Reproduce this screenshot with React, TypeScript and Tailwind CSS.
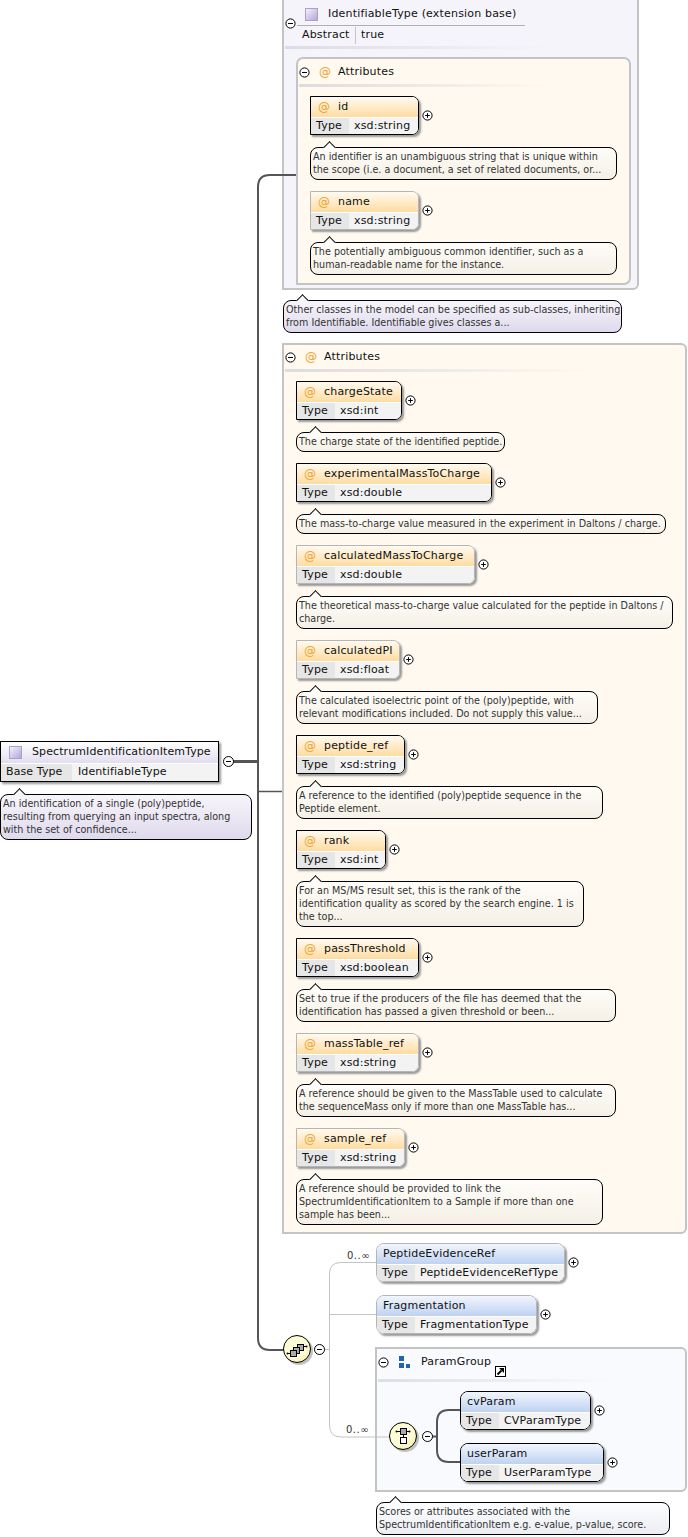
const attrDoc = "bg-linear-to-b from-[#fffdf9] to-[#f4f0e6]";

function Toggle({ open = false }: { open?: boolean }) {
  return (
    <svg width="11" height="11" viewBox="0 0 11 11" className="shrink-0">
      <circle cx="5.5" cy="5.5" r="4.6" fill="#fff" stroke="#000" />
      <path d={open ? "M3 5.5h5" : "M3.2 5.5h4.6M5.5 3.2v4.6"} stroke="#000" />
    </svg>
  );
}

function Doc({ lines, width, tone = attrDoc, notch = "bg-[#fffdf9]" }: { lines: string[]; width: string; tone?: string; notch?: string }) {
  return (
    <div className={`relative shrink-0 rounded-[8px] border border-black px-[2px] pt-[2px] pb-[3px] text-[9.6px] leading-[13px] whitespace-nowrap text-[#333] ${width} ${tone}`}>
      <div className={`absolute -top-[5px] left-[14px] h-[9px] w-[9px] rotate-45 border-t border-l border-black ${notch}`} />
      <div className="relative">
        {lines.map((line) => (
          <div key={line}>{line}</div>
        ))}
      </div>
    </div>
  );
}

function TypeRow({ type }: { type: string }) {
  return (
    <div className="flex h-[17px] items-center border-t border-white bg-[#f3f3f3]">
      <div className="flex h-full w-[38px] items-center bg-[#e6e6e6] pl-[5px]">Type</div>
      <div className="pl-[5px]">{type}</div>
    </div>
  );
}

function AttrCard({ name, type, width, optional }: { name: string; type: string; width: string; optional?: boolean }) {
  return (
    <div className="flex items-center gap-[3px]">
      <div className={`overflow-hidden rounded-r-[7px] border text-[11px] tracking-[0.18px] shadow-[2px_2px_2px_#999] ${optional ? "border-[#b5b5b5]" : "border-black"} ${width}`}>
        <div className="flex h-[20px] items-center bg-linear-to-b from-[#fffaf0] to-[#ffdca0]">
          <span className="w-[27px] pl-[7px] text-[12px] text-[#eda32c]">@</span>
          <span>{name}</span>
        </div>
        <TypeRow type={type} />
      </div>
      <Toggle />
    </div>
  );
}

function ElementCard({ name, type, width, optional }: { name: string; type: string; width: string; optional?: boolean }) {
  return (
    <div className="flex items-center gap-[3px]">
      <div className={`overflow-hidden rounded-[8px] border text-[11px] tracking-[0.18px] shadow-[2px_2px_2px_#999] ${optional ? "border-[#b5b5b5]" : "border-black"} ${width}`}>
        <div className="flex h-[20px] items-center bg-linear-to-b from-[#f2f6fd] to-[#bfd2f1] pl-[6px]">{name}</div>
        <TypeRow type={type} />
      </div>
      <Toggle />
    </div>
  );
}

function Attribute(props: { name: string; type: string; cardWidth: string; docWidth: string; lines: string[]; optional?: boolean }) {
  return (
    <div className="flex flex-col gap-[12px]">
      <AttrCard name={props.name} type={props.type} width={props.cardWidth} optional={props.optional} />
      <Doc lines={props.lines} width={props.docWidth} />
    </div>
  );
}

function AttributesHeader({ line }: { line: string }) {
  return (
    <>
      <div className="flex h-[14px] items-center text-[11px] tracking-[0.18px]">
        <Toggle open />
        <span className="w-[28px] pl-[9px] text-[12px] text-[#eda32c]">@</span>
        <span>Attributes</span>
      </div>
      <div className={`mt-[5px] h-[3px] bg-linear-to-r from-[#dcdcdc] to-transparent ${line}`} />
    </>
  );
}

function TypeIcon() {
  return <div className="h-[13px] w-[13px] shrink-0 border border-[#a9a2c4] bg-linear-to-br from-[#f4f1fb] to-[#b4a6d8]" />;
}

const attributes = [
  { name: "chargeState", type: "xsd:int", cardWidth: "w-[106px]", docWidth: "w-[209px]", lines: ["The charge state of the identified peptide."] },
  { name: "experimentalMassToCharge", type: "xsd:double", cardWidth: "w-[196px]", docWidth: "w-[370px]", lines: ["The mass-to-charge value measured in the experiment in Daltons / charge."] },
  { name: "calculatedMassToCharge", type: "xsd:double", cardWidth: "w-[179px]", docWidth: "w-[377px]", optional: true, lines: ["The theoretical mass-to-charge value calculated for the peptide in Daltons /", "charge."] },
  { name: "calculatedPI", type: "xsd:float", cardWidth: "w-[104px]", docWidth: "w-[302px]", optional: true, lines: ["The calculated isoelectric point of the (poly)peptide, with", "relevant modifications included. Do not supply this value..."] },
  { name: "peptide_ref", type: "xsd:string", cardWidth: "w-[109px]", docWidth: "w-[307px]", lines: ["A reference to the identified (poly)peptide sequence in the", "Peptide element."] },
  { name: "rank", type: "xsd:int", cardWidth: "w-[90px]", docWidth: "w-[288px]", lines: ["For an MS/MS result set, this is the rank of the", "identification quality as scored by the search engine. 1 is", "the top..."] },
  { name: "passThreshold", type: "xsd:boolean", cardWidth: "w-[123px]", docWidth: "w-[320px]", lines: ["Set to true if the producers of the file has deemed that the", "identification has passed a given threshold or been..."] },
  { name: "massTable_ref", type: "xsd:string", cardWidth: "w-[123px]", docWidth: "w-[320px]", optional: true, lines: ["A reference should be given to the MassTable used to calculate", "the sequenceMass only if more than one MassTable has..."] },
  { name: "sample_ref", type: "xsd:string", cardWidth: "w-[109px]", docWidth: "w-[307px]", optional: true, lines: ["A reference should be provided to link the", "SpectrumIdentificationItem to a Sample if more than one", "sample has been..."] },
];

function Connectors() {
  return (
    <svg width="688" height="1537" className="pointer-events-none absolute top-0 left-0">
      <defs>
        <radialGradient id="node" cx="0.4" cy="0.35" r="0.75">
          <stop offset="0.6" stopColor="#fffcd8" />
          <stop offset="1" stopColor="#f3e9a6" />
        </radialGradient>
      </defs>
      <g fill="none" stroke="#555">
        <path d="M233 761.5H258" strokeWidth="3" />
        <path d="M296 175H270Q258 175 258 187V1338Q258 1350 270 1350H284" strokeWidth="2" />
        <path d="M258 791.5H282" strokeWidth="1.5" />
        <path d="M432 1436.5H437M460 1410H449Q437 1410 437 1422V1450Q437 1462 449 1462H460" strokeWidth="2" />
      </g>
      <g fill="none" stroke="#c4c4c4">
        <path d="M324 1349.5H329.5M376 1262.5H341Q329.5 1262.5 329.5 1274V1425Q329.5 1437 341 1437H390M329.5 1314.5H376" />
      </g>

      {/* sequence node */}
      <circle cx="299" cy="1351" r="14" fill="#999" opacity="0.6" />
      <circle cx="297" cy="1349" r="13.5" fill="url(#node)" stroke="#000" />
      <path d="M287 1353.500h3M303 1346.500h4" stroke="#000" />
      <circle cx="287.500" cy="1353.500" r="1" fill="#000" />
      <circle cx="306.500" cy="1346.500" r="1" fill="#000" />
      <rect x="297.500" y="1344.500" width="6" height="6" fill="#aaa" stroke="#000" />
      <rect x="293.500" y="1347.500" width="6" height="6" fill="#aaa" stroke="#000" />
      <rect x="290.500" y="1350.500" width="6" height="6" fill="#aaa" stroke="#000" />

      {/* choice node */}
      <circle cx="405" cy="1438" r="14" fill="#999" opacity="0.6" />
      <circle cx="403" cy="1436" r="13.500" fill="url(#node)" stroke="#000" />
      <path d="M396 1431.500h14M403.500 1434v3" stroke="#000" />
      <circle cx="396.500" cy="1431.500" r="1" fill="#000" />
      <circle cx="409.500" cy="1431.500" r="1" fill="#000" />
      <rect x="400.500" y="1428.500" width="6" height="6" fill="#aaa" stroke="#000" />
      <rect x="400.500" y="1437.500" width="6" height="6" fill="#fff" stroke="#000" />

      <g fill="#fff" stroke="#000">
        <circle cx="228.500" cy="761.500" r="5" />
        <circle cx="319.500" cy="1349.500" r="5" />
        <circle cx="427.500" cy="1436.500" r="5" />
      </g>
      <path d="M226 761.500h5M317 1349.500h5M425 1436.500h5" stroke="#000" />
    </svg>
  );
}

export default function App() {
  return (
    <div className="relative flex h-[1537px] w-[688px] overflow-hidden bg-white font-['DejaVu_Sans',sans-serif] text-[#111]">
      <div className="flex w-[282px] shrink-0 flex-col gap-[12px] pt-[741px]">
        <div className="w-[219px] border border-black text-[11px] tracking-[0.1px] shadow-[2px_2px_2px_#999]">
          <div className="flex h-[21px] items-center gap-[10px] bg-linear-to-b from-white to-[#e2deee] pl-[8px]">
            <TypeIcon />
            <span>SpectrumIdentificationItemType</span>
          </div>
          <div className="flex h-[18px] items-center border-t border-white bg-[#f3f3f3]">
            <div className="flex h-full w-[71px] items-center bg-[#e6e6e6] pl-[5px]">Base Type</div>
            <div className="pl-[6px]">IdentifiableType</div>
          </div>
        </div>
        <Doc
          width="w-[252px]"
          tone="bg-linear-to-b from-[#f7f5fb] to-[#dfdaec]"
          notch="bg-[#f7f5fb]"
          lines={["An identification of a single (poly)peptide,", "resulting from querying an input spectra, along", "with the set of confidence..."]}
        />
      </div>

      <div className="flex w-[406px] flex-col">
        <div className="-mt-px h-[291px] w-[357px] shrink-0 rounded-br-[6px] border-2 border-t border-[#c4c4c4] bg-[#f6f4fb]">
          <div className="relative ml-[1px] h-[48px] text-[11px] tracking-[0.18px]">
            <div className="absolute top-[18px] left-[0px]">
              <Toggle open />
            </div>
            <div className="ml-[12px] flex h-[26px] w-[228px] items-center gap-[10px] border-b border-[#b0b0b0] pt-[4px] pl-[8px]">
              <TypeIcon />
              <span>IdentifiableType (extension base)</span>
            </div>
            <div className="ml-[17px] flex h-[19px] items-center">
              <span className="w-[53px]">Abstract</span>
              <span className="border-l border-[#c4c4c4] pl-[5px]">true</span>
            </div>
            <div className="mt-[1px] h-[3px] w-[270px] bg-linear-to-r from-[#dedbe8] to-transparent" />
          </div>
          <div className="mt-[9px] ml-[12px] h-[228px] w-[335px] rounded-[7px] rounded-bl-none border-2 border-[#c4c4c4] bg-[#fff9ef] pt-[6px] pl-[1px]">
            <AttributesHeader line="w-[250px]" />
            <div className="mt-[9px] flex flex-col gap-[11px] pl-[11px]">
              <Attribute name="id" type="xsd:string" cardWidth="w-[109px]" docWidth="w-[307px]" lines={["An identifier is an unambiguous string that is unique within", "the scope (i.e. a document, a set of related documents, or..."]} />
              <Attribute name="name" type="xsd:string" cardWidth="w-[109px]" docWidth="w-[307px]" optional lines={["The potentially ambiguous common identifier, such as a", "human-readable name for the instance."]} />
            </div>
          </div>
        </div>

        <div className="mt-[10px] ml-[1px] shrink-0">
          <Doc
            width="w-[339px]"
            tone="bg-linear-to-b from-[#f7f5fb] to-[#dfdaec]"
            notch="bg-[#f7f5fb]"
            lines={["Other classes in the model can be specified as sub-classes, inheriting", "from Identifiable. Identifiable gives classes a..."]}
          />
        </div>

        <div className="mt-[10px] h-[891px] w-[405px] shrink-0 rounded-r-[6px] border-2 border-[#c4c4c4] bg-[#fff9ef] pt-[5px]">
          <div className="pl-[1px]">
            <AttributesHeader line="w-[305px]" />
          </div>
          <div className="mt-[9px] flex flex-col gap-[11px] pl-[12px]">
            {attributes.map((a) => (
              <Attribute key={a.name} {...a} />
            ))}
          </div>
        </div>

        <div className="mt-[9px] flex shrink-0 flex-col gap-[13px] pl-[94px]">
          <ElementCard name="PeptideEvidenceRef" type="PeptideEvidenceRefType" width="w-[189px]" optional />
          <ElementCard name="Fragmentation" type="FragmentationType" width="w-[161px]" optional />
          <div className="-ml-px h-[145px] w-[312px] rounded-r-[6px] border-2 border-[#c4c4c4] bg-[#f8fafe] pt-[6px] pl-[1px]">
            <div className="flex h-[14px] items-center text-[11px] tracking-[0.18px]">
              <Toggle open />
              <svg width="13" height="13" viewBox="0 0 13 13" className="ml-[9px]">
                <path d="M1 0h5v5H1zM1 7h5v5H1zM8 8h4v4H8z" fill="#2163ae" />
              </svg>
              <span className="ml-[10px]">ParamGroup</span>
            </div>
            <div className="mt-[10px] h-[3px] w-[235px] bg-linear-to-r from-[#dddfe4] to-transparent" />
            <div className="mt-[9px] flex flex-col gap-[13px] pl-[82px]">
              <ElementCard name="cvParam" type="CVParamType" width="w-[131px]" />
              <ElementCard name="userParam" type="UserParamType" width="w-[144px]" />
            </div>
          </div>
          <div className="-mt-[3px]">
            <Doc
              width="w-[294px]"
              tone="bg-linear-to-b from-[#fcfdff] to-[#eceef3]"
              notch="bg-[#fcfdff]"
              lines={["Scores or attributes associated with the", "SpectrumIdentificationItem e.g. e-value, p-value, score."]}
            />
          </div>
        </div>
      </div>

      <Connectors />

      <span className="absolute top-[1249px] left-[347px] text-[10px] leading-[13px] tracking-[0.5px] text-[#333]">0..∞</span>
      <span className="absolute top-[1423px] left-[346px] text-[10px] leading-[13px] tracking-[0.5px] text-[#333]">0..∞</span>
      <svg width="11" height="11" viewBox="0 0 11 11" className="absolute top-[1366px] left-[495px]">
        <rect x="0.500" y="0.500" width="10" height="10" fill="#fff" stroke="#000" />
        <path d="M2.500 8.500L6.500 4.500" stroke="#000" strokeWidth="2" />
        <path d="M4 2h5v5z" fill="#000" />
      </svg>
    </div>
  );
}
